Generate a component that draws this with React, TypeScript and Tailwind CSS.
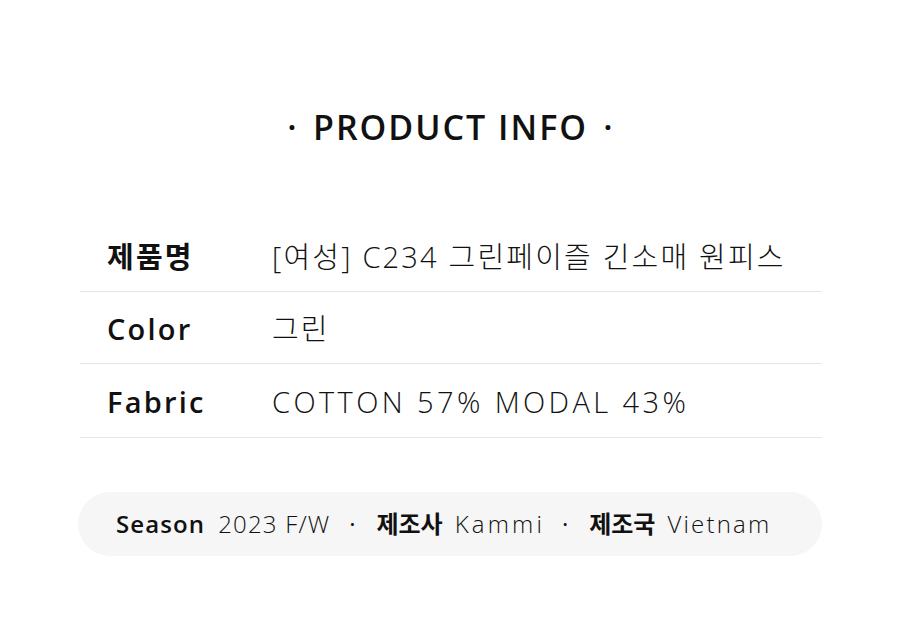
export default function App() {
  const font = { fontFamily: "'Open Sans', 'Noto Sans CJK KR', sans-serif" };
  const rows = [
    { label: "제품명", value: "[여성] C234 그린페이즐 긴소매 원피스", h: "h-[71px]", t: "tracking-[2.2px]" },
    { label: "Color", value: "그린", h: "h-[72px]", t: "tracking-[2px]" },
    { label: "Fabric", value: "COTTON 57% MODAL 43%", h: "h-[74px]", t: "tracking-[3.4px]" },
  ];
  return (
    <div className="w-[900px] h-[639px] bg-white text-[#111]" style={font}>
      <div className="pt-[104px] flex justify-center items-center text-[34px] leading-[46px] font-semibold">
        <span className="w-[20px] text-center mr-[11px]">·</span>
        <span className="tracking-[2px]">PRODUCT INFO</span>
        <span className="w-[20px] text-center ml-[10px]">·</span>
      </div>
      <div className="ml-[80px] mr-[78px] mt-[71px]">
        {rows.map((r, i) => (
          <div key={i} className={`flex items-center border-b border-[#e6e6e6] pt-[2px] ${r.h}`}>
            <div className="w-[192px] pl-[27px] text-[29px] font-semibold tracking-[2.2px]">{r.label}</div>
            <div className={`text-[29px] font-light ${r.t}`}>{r.value}</div>
          </div>
        ))}
      </div>
      <div className="mx-[78px] mt-[54px] h-[64px] rounded-full bg-[#f6f6f6] flex items-center pl-[38px] text-[24px]">
        <span className="font-semibold tracking-[1.1px]">Season</span>
        <span className="ml-[13px] font-light tracking-[1.2px]">2023 F/W</span>
        <span className="w-[24px] text-center ml-[10px] mr-[12px]">·</span>
        <span className="font-semibold">제조사</span>
        <span className="ml-[12px] font-light tracking-[3.2px]">Kammi</span>
        <span className="w-[24px] text-center ml-[8px] mr-[12px]">·</span>
        <span className="font-semibold">제조국</span>
        <span className="ml-[12px] font-light tracking-[2.2px]">Vietnam</span>
      </div>
    </div>
  );
}
